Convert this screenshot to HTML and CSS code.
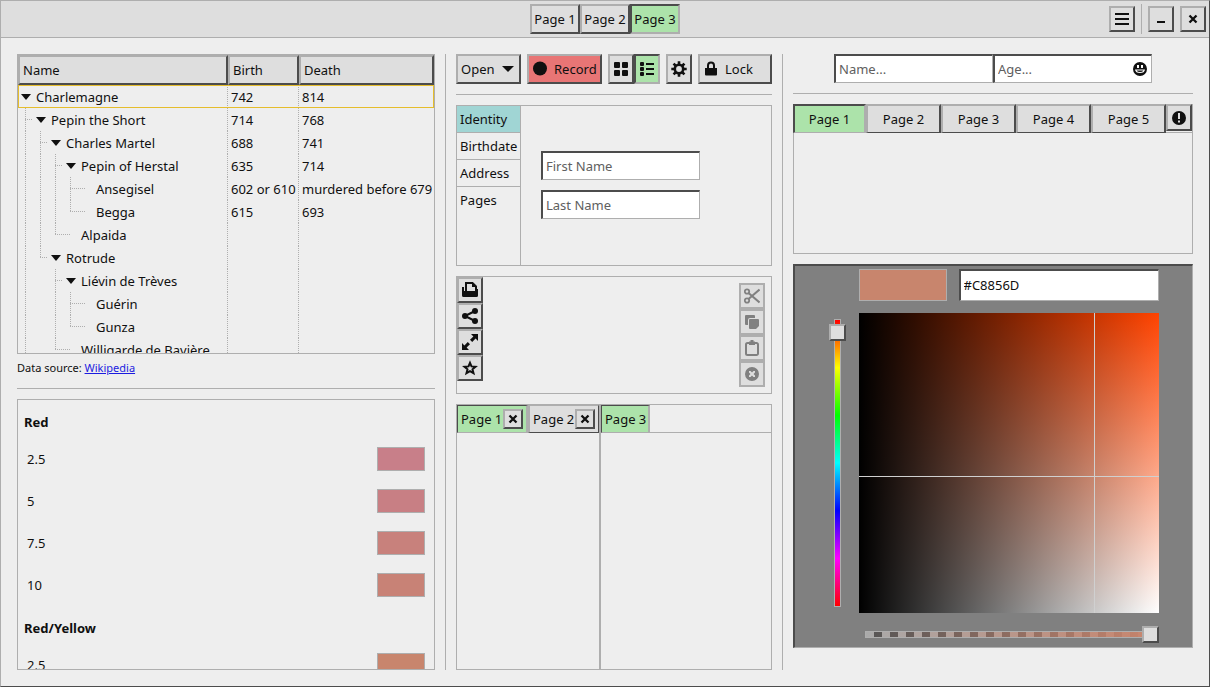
FILE: index.html
```html
<!DOCTYPE html>
<html lang="en">
<head>
<meta charset="utf-8">
<title>Widget Gallery</title>
<link rel="stylesheet" href="styles.css">
</head>
<body>
<div class="window">
  <header class="titlebar">
    <div class="linked title-tabs">
      <button class="btn text">Page 1</button><button class="btn text">Page 2</button><button class="btn text pressed" aria-pressed="true">Page 3</button>
    </div>
    <div class="window-controls">
      <button class="btn icon" aria-label="Menu"><svg viewBox="0 0 16 16"><path d="M1 2h14v2H1zM1 7h14v2H1zM1 12h14v2H1z"/></svg></button>
      <span class="vsep short"></span>
      <button class="btn icon" aria-label="Minimize"><svg viewBox="0 0 16 16"><path d="M4 10h8v2H4z"/></svg></button>
      <button class="btn icon" aria-label="Close"><svg viewBox="0 0 16 16"><path class="line" d="M4.500 4.500l7 7M11.500 4.500l-7 7" stroke-width="2.300"/></svg></button>
    </div>
  </header>

  <main class="columns">
    <section class="column">
      <div class="tree-block">
        <div class="panel tree-scroll">
          <table class="tree">
            <colgroup><col class="c-name"><col class="c-birth"><col></colgroup>
            <thead><tr><th>Name</th><th>Birth</th><th>Death</th></tr></thead>
            <tbody>
              <tr class="focused"><td><div class="node"><span class="exp open"></span>Charlemagne</div></td><td>742</td><td>814</td></tr>
              <tr><td><div class="node"><i class="g tee"></i><span class="exp open"></span>Pepin the Short</div></td><td>714</td><td>768</td></tr>
              <tr><td><div class="node"><i class="g bar"></i><i class="g tee"></i><span class="exp open"></span>Charles Martel</div></td><td>688</td><td>741</td></tr>
              <tr><td><div class="node"><i class="g bar"></i><i class="g bar"></i><i class="g tee"></i><span class="exp open"></span>Pepin of Herstal</div></td><td>635</td><td>714</td></tr>
              <tr><td><div class="node"><i class="g bar"></i><i class="g bar"></i><i class="g bar"></i><i class="g tee"></i><span class="exp leaf"></span>Ansegisel</div></td><td>602 or 610</td><td>murdered before 679</td></tr>
              <tr><td><div class="node"><i class="g bar"></i><i class="g bar"></i><i class="g bar"></i><i class="g end"></i><span class="exp leaf"></span>Begga</div></td><td>615</td><td>693</td></tr>
              <tr><td><div class="node"><i class="g bar"></i><i class="g bar"></i><i class="g end"></i><span class="exp leaf"></span>Alpaida</div></td><td></td><td></td></tr>
              <tr><td><div class="node"><i class="g bar"></i><i class="g end"></i><span class="exp open"></span>Rotrude</div></td><td></td><td></td></tr>
              <tr><td><div class="node"><i class="g bar"></i><i class="g"></i><i class="g tee"></i><span class="exp open"></span>Liévin de Trèves</div></td><td></td><td></td></tr>
              <tr><td><div class="node"><i class="g bar"></i><i class="g"></i><i class="g bar"></i><i class="g tee"></i><span class="exp leaf"></span>Guérin</div></td><td></td><td></td></tr>
              <tr><td><div class="node"><i class="g bar"></i><i class="g"></i><i class="g bar"></i><i class="g end"></i><span class="exp leaf"></span>Gunza</div></td><td></td><td></td></tr>
              <tr><td><div class="node"><i class="g bar"></i><i class="g"></i><i class="g end"></i><span class="exp leaf"></span>Willigarde de Bavière</div></td><td></td><td></td></tr>
            </tbody>
          </table>
        </div>
        <p class="source">Data source: <a href="#">Wikipedia</a></p>
      </div>
      <div class="hsep"></div>
      <div class="panel color-list">
        <h2>Red</h2>
        <ul>
          <li>2.5<span class="chip" style="background:#c87f89"></span></li>
          <li>5<span class="chip" style="background:#c87f84"></span></li>
          <li>7.5<span class="chip" style="background:#c8817c"></span></li>
          <li>10<span class="chip" style="background:#c88276"></span></li>
        </ul>
        <h2>Red/Yellow</h2>
        <ul>
          <li>2.5<span class="chip" style="background:#c8856d"></span></li>
        </ul>
      </div>
    </section>

    <div class="vsep"></div>

    <section class="column">
      <div class="toolbar">
        <button class="btn open-btn">Open<svg class="caret" viewBox="0 0 16 16"><path d="M2 5h12L8 11z"/></svg></button>
        <button class="btn labeled record"><svg viewBox="0 0 16 16"><circle cx="8" cy="7.500" r="7"/></svg>Record</button>
        <div class="linked">
          <button class="btn icon" aria-label="Grid view"><svg viewBox="0 0 16 16"><rect x="1" y="1" width="6" height="6" rx="1"/><rect x="9" y="1" width="6" height="6" rx="1"/><rect x="1" y="9" width="6" height="6" rx="1"/><rect x="9" y="9" width="6" height="6" rx="1"/></svg></button><button class="btn icon pressed" aria-label="List view" aria-pressed="true"><svg viewBox="0 0 16 16"><rect x="1" y="1" width="4" height="4" rx="1"/><rect x="1" y="6" width="4" height="4" rx="1"/><rect x="1" y="11" width="4" height="4" rx="1"/><path d="M7 2h8v2H7zM7 7h8v2H7zM7 12h8v2H7z"/></svg></button>
        </div>
        <button class="btn icon" aria-label="Settings"><svg viewBox="0 0 16 16"><circle class="line" cx="8" cy="8" r="4.200" stroke-width="2.600"/><path class="line" stroke-width="2.600" d="M8 .3v3M8 12.700v3M.3 8h3M12.700 8h3M2.550 2.550l2.200 2.200M11.250 11.250l2.200 2.200M2.550 13.450l2.200-2.200M11.250 4.750l2.200-2.200"/></svg></button>
        <button class="btn labeled lock"><svg viewBox="0 0 16 16"><path d="M2 7h12v6.500a1 1 0 0 1-1 1H3a1 1 0 0 1-1-1z"/><path class="line" d="M5 8V4.500a3 3 0 0 1 6 0V8" stroke-width="2"/></svg>Lock</button>
      </div>
      <div class="hsep"></div>
      <div class="panel stack">
        <nav class="sidebar">
          <button class="current">Identity</button>
          <button>Birthdate</button>
          <button>Address</button>
          <button>Pages</button>
        </nav>
        <div class="form">
          <input class="entry" type="text" placeholder="First Name" aria-label="First Name">
          <input class="entry" type="text" placeholder="Last Name" aria-label="Last Name">
        </div>
      </div>
      <div class="panel tools">
        <div class="tool-col">
          <button class="btn icon" aria-label="Print"><svg viewBox="0 0 16 16"><path class="line" d="M4 9V1h6.500L14 4.500V9" stroke-width="2"/><path d="M10 1v4h4zM0 5h2v6h12V7h2v6.500a1.500 1.500 0 0 1-1.500 1.500h-13A1.500 1.500 0 0 1 0 13.500zM2 9h12v4H2z"/></svg></button>
          <button class="btn icon" aria-label="Share"><svg viewBox="0 0 16 16"><circle cx="3" cy="8" r="3"/><circle cx="13" cy="3" r="3"/><circle cx="13" cy="13" r="3"/><path class="line" d="M13 3L3 8l10 5" stroke-width="2"/></svg></button>
          <button class="btn icon" aria-label="Fullscreen"><svg viewBox="0 0 16 16"><path d="M9 0h7v7l-2.400-2.400L10.200 8 8 5.800l3.400-3.400zM7 16H0V9l2.400 2.400L5.800 8 8 10.200l-3.400 3.400z"/></svg></button>
          <button class="btn icon" aria-label="Favorite"><svg viewBox="0 0 16 16"><path class="line" d="M8 2.800l1.500 3.600 4 .3-3 2.600 1 3.900L8 11.100l-3.500 2.100 1-3.900-3-2.600 4-.3z" stroke-width="2"/></svg></button>
        </div>
        <div class="tool-col inset">
          <button class="btn icon" disabled aria-label="Cut"><svg viewBox="0 0 16 16"><circle class="line" cx="3" cy="3.500" r="2.200" stroke-width="1.800"/><circle class="line" cx="3" cy="12.500" r="2.200" stroke-width="1.800"/><path class="line" d="M4.500 5L15.500 14.500M4.500 11L15.500 1.500" stroke-width="2"/></svg></button>
          <button class="btn icon" disabled aria-label="Copy"><svg viewBox="0 0 16 16"><path d="M2 1h8a1 1 0 0 1 1 1v2H6a2 2 0 0 0-2 2v5H2a1 1 0 0 1-1-1V2a1 1 0 0 1 1-1z"/><path d="M6 5h8a1 1 0 0 1 1 1v6l-3 3H6a1 1 0 0 1-1-1V6a1 1 0 0 1 1-1z"/></svg></button>
          <button class="btn icon" disabled aria-label="Paste"><svg viewBox="0 0 16 16"><path class="line" d="M5 3H3.500A1.500 1.500 0 0 0 2 4.500v9A1.500 1.500 0 0 0 3.500 15h9a1.500 1.500 0 0 0 1.500-1.500v-9A1.500 1.500 0 0 0 12.500 3H11" stroke-width="2"/><path d="M5 1.500h1.500V0h3v1.500H11V5H5z"/></svg></button>
          <button class="btn icon" disabled aria-label="Delete"><svg viewBox="0 0 16 16"><path fill-rule="evenodd" d="M8 1a7 7 0 1 0 0 14A7 7 0 0 0 8 1zM5 5h1.500L8 6.500 9.500 5H11v1.500L9.500 8 11 9.500V11H9.500L8 9.500 6.500 11H5V9.500L6.500 8 5 6.500z"/></svg></button>
        </div>
      </div>
      <div class="panel paned">
        <div class="notebook">
          <div class="tabs">
            <div class="tab active"><button class="tab-label">Page 1</button><button class="btn close" aria-label="Close Page 1"><svg viewBox="0 0 16 16"><path class="line" d="M4.500 4.500l7 7M11.500 4.500l-7 7" stroke-width="2.300"/></svg></button></div>
            <div class="tab"><button class="tab-label">Page 2</button><button class="btn close" aria-label="Close Page 2"><svg viewBox="0 0 16 16"><path class="line" d="M4.500 4.500l7 7M11.500 4.500l-7 7" stroke-width="2.300"/></svg></button></div>
          </div>
        </div>
        <div class="handle"></div>
        <div class="notebook grow">
          <div class="tabs"><div class="tab active"><button class="tab-label">Page 3</button></div></div>
        </div>
      </div>
    </section>

    <div class="vsep"></div>

    <section class="column">
      <div class="entries">
        <input class="entry" type="text" placeholder="Name..." aria-label="Name">
        <div class="entry with-icon">
          <input type="text" placeholder="Age..." aria-label="Age">
          <svg viewBox="0 0 16 16"><path fill-rule="evenodd" d="M8 1a7 7 0 1 0 0 14A7 7 0 0 0 8 1zM5 4h2v3H5zM9 4h2v3H9zM3 8.500h10Q12.500 12 8 12T3 8.500zM4.500 9.500Q5.500 11 8 11t3.500-1.500z"/></svg>
        </div>
      </div>
      <div class="hsep"></div>
      <div class="panel pages">
        <div class="wide-tabs">
          <button class="btn pressed">Page 1</button><button class="btn">Page 2</button><button class="btn">Page 3</button><button class="btn">Page 4</button><button class="btn">Page 5</button>
          <button class="btn icon alert" aria-label="Alert"><svg viewBox="0 0 16 16"><path fill-rule="evenodd" d="M8 1a7 7 0 1 0 0 14A7 7 0 0 0 8 1zM7 3h2v6H7zM7 10.500h2v2H7z"/></svg></button>
        </div>
      </div>
      <div class="picker">
        <div class="picker-top">
          <span class="sample"></span>
          <input class="entry" type="text" value="#C8856D" aria-label="Color value">
        </div>
        <input class="range hue" type="range" min="0" max="360" value="14" aria-label="Hue">
        <div class="plane"></div>
        <input class="range alpha" type="range" min="0" max="100" value="100" aria-label="Alpha">
      </div>
    </section>
  </main>
</div>
</body>
</html>
```
FILE: styles.css
```css
:root {
  --bg: #eeeeee;
  --face: #dedede;
  --light: #aeaeae;
  --dark: #4c4c4c;
  --ink: #101010;
  --green: #ace3aa;
}

* { box-sizing: border-box; }

body {
  margin: 0;
  font: 13px/18px "Noto Sans", sans-serif;
  color: var(--ink);
  background: var(--bg);
}

button, input { font: inherit; color: inherit; margin: 0; }
h2, p, ul { margin: 0; padding: 0; }
svg { width: 16px; height: 16px; flex: none; fill: currentColor; display: block; }
.line { fill: none; stroke: currentColor; }

.window {
  height: 100vh;
  display: flex;
  flex-direction: column;
  border: 1px solid;
  border-color: var(--light) var(--dark) var(--dark) var(--light);
}

/* Title bar */
.titlebar {
  display: grid;
  grid-template-columns: 1fr auto 1fr;
  align-items: center;
  padding: 3px;
  background: var(--face);
  border-bottom: 1px solid var(--light);
}
.title-tabs { grid-column: 2; }
.window-controls { display: flex; gap: 6px; justify-content: flex-end; align-items: center; }
.linked { display: flex; }

/* Buttons */
.btn {
  display: flex;
  align-items: center;
  height: 30px;
  padding: 0 3px;
  background: var(--face);
  border: 2px solid;
  border-color: var(--light) var(--dark) var(--dark) var(--light);
  border-radius: 0;
  white-space: nowrap;
}
.btn.pressed {
  background: var(--green);
  border-color: var(--dark) var(--light) var(--light) var(--dark);
}
.btn.icon { width: 26px; justify-content: center; }
.btn:disabled { color: #808080; border-color: var(--light); }
.title-tabs .btn { width: 50px; justify-content: center; padding: 0; }
.window-controls .btn, .tool-col .btn { height: 26px; }

/* Separators */
.vsep { background: var(--light); width: 1px; }
.vsep.short { height: 30px; }
.hsep { background: var(--light); height: 1px; flex: none; }

/* Columns */
.columns {
  flex: 1;
  min-height: 0;
  display: grid;
  grid-template-columns: minmax(0, 418fr) 1px minmax(0, 316fr) 1px minmax(0, 400fr);
  grid-template-rows: minmax(0, 1fr);
  gap: 10px;
  padding: 16px;
}
.column { display: flex; flex-direction: column; gap: 10px; min-height: 0; }
.panel { border: 1px solid var(--light); }

/* Tree */
.tree-scroll { height: 300px; overflow: hidden; }
.tree { width: 100%; table-layout: fixed; border-spacing: 0; }
.c-name { width: 210px; }
.c-birth { width: 71px; }
.tree th {
  height: 30px;
  padding: 0 3px;
  text-align: left;
  font-weight: 400;
  background: var(--face);
  border: 2px solid;
  border-color: var(--light) var(--dark) var(--dark) var(--light);
}
.tree td { height: 23px; padding: 0 3px; white-space: nowrap; border-right: 1px dotted var(--light); }
.tree td:first-child { padding: 0; }
.tree td:last-child { border-right: 0; }
.focused { outline: 1px solid #e5bd2c; outline-offset: -1px; }
.node { display: flex; align-items: center; height: 23px; }
.g, .exp {
  --v: repeating-linear-gradient(var(--light) 0 1px, transparent 1px 2px);
  --h: repeating-linear-gradient(to right, var(--light) 0 1px, transparent 1px 2px);
  align-self: stretch;
  flex: none;
  width: 15px;
}
.g.bar { background: var(--v) 7px 0 / 1px 100% no-repeat; }
.g.tee { background: var(--v) 7px 0 / 1px 100% no-repeat, var(--h) 7px 11px / 7px 1px no-repeat; }
.g.end { background: var(--v) 7px 0 / 1px 12px no-repeat, var(--h) 7px 11px / 7px 1px no-repeat; }
.exp { width: 18px; padding: 9px 0 0 3px; }
.exp.open::before {
  content: "";
  display: block;
  width: 10px;
  height: 6px;
  background: var(--ink);
  clip-path: polygon(0 0, 100% 0, 50% 100%);
}
.exp.leaf { background: var(--h) 0 11px / 7px 1px no-repeat; }
.source { height: 24px; padding-top: 5px; font-size: 11px; }
.source a { color: #1b1be0; }

/* Colour list */
.color-list { flex: 1; min-height: 0; overflow: hidden; }
.color-list h2 { height: 38px; padding: 13px 6px 0; font-size: 13px; line-height: 18px; }
.color-list li {
  display: flex;
  align-items: center;
  justify-content: space-between;
  height: 42px;
  padding: 0 9px;
}
.chip { width: 48px; height: 24px; border: 1px solid var(--light); }

/* Middle column */
.toolbar { display: flex; gap: 6px; }
.open-btn { width: 65px; justify-content: space-between; }
.labeled { gap: 6px; }
.record { width: 75px; background: #e87575; }
.lock { flex: 1; }

.stack { display: flex; height: 161px; }
.sidebar { display: flex; flex-direction: column; width: 64px; border-right: 1px solid var(--light); }
.sidebar button {
  height: 27px;
  padding: 0 3px;
  text-align: left;
  background: none;
  border: 0;
  border-bottom: 1px solid var(--light);
}
.sidebar button:last-child { border-bottom-color: transparent; }
.sidebar .current { background: #a0d5d4; }
.form { display: flex; flex-direction: column; justify-content: center; gap: 10px; padding: 0 20px 2px; }

.entry {
  width: 159px;
  height: 29px;
  padding: 0 3px;
  background: #fff;
  border: solid;
  border-width: 2px 1px 1px 2px;
  border-color: var(--dark) var(--light) var(--light) var(--dark);
  border-radius: 0;
}
::placeholder { color: #606060; opacity: 1; }

.tools { display: flex; justify-content: space-between; }
.tool-col.inset { padding: 6px; }

.paned { display: flex; flex: 1; min-height: 0; }
.handle { width: 2px; background: var(--light); }
.grow { flex: 1; }
.tabs { display: flex; height: 28px; border-bottom: 1px solid var(--light); }
.tab {
  display: flex;
  align-items: center;
  gap: 2px;
  height: 28px;
  padding: 0 3px;
  background: var(--face);
  border: solid;
  border-width: 1px 1px 1px 2px;
  border-color: var(--light) var(--dark) var(--dark) var(--light);
}
.tab.active {
  background: var(--green);
  border-width: 1px 2px 1px 1px;
  border-color: var(--dark) var(--light) var(--light) var(--dark);
}
.tab-label { padding: 0; width: 40px; border: 0; background: none; white-space: nowrap; }
.btn.close { width: 20px; height: 20px; padding: 0; justify-content: center; }

/* Right column */
.entries { display: flex; justify-content: center; }
.with-icon { display: flex; align-items: center; }
.with-icon input { flex: 1; min-width: 0; padding: 0; border: 0; background: none; }

.pages { height: 150px; border-top: 0; }
.wide-tabs { display: flex; margin-left: -1px; border-bottom: 1px solid var(--light); }
.wide-tabs .btn { flex: 1; height: 29px; justify-content: center; border-bottom-width: 1px; margin-bottom: -1px; }
.wide-tabs .pressed { flex: 0 1 73px; border-bottom-color: var(--light); }
.wide-tabs .alert { flex: none; height: 27px; border-bottom-width: 2px; }

.picker {
  display: grid;
  grid-template-columns: 17px 300px;
  grid-template-rows: 32px 300px 18px;
  gap: 12px 13px;
  justify-content: center;
  padding: 3px 0 4px;
  background: #808080;
  border: solid;
  border-width: 2px 1px 1px 2px;
  border-color: var(--dark) var(--light) var(--light) var(--dark);
}
.picker-top { grid-column: 2; display: flex; gap: 12px; }
.picker-top .entry { width: 200px; height: 32px; padding-bottom: 1px; }
.sample { flex: 1; background: #c8856d; border: 1px solid var(--light); }
.plane {
  background:
    linear-gradient(#d0d0d0, #d0d0d0) 235px 0 / 1px 100% no-repeat,
    linear-gradient(#d0d0d0, #d0d0d0) 0 163px / 100% 1px no-repeat,
    linear-gradient(to right, #000, transparent),
    linear-gradient(#ff4300, #fff);
}
.range { appearance: none; }
.range::-webkit-slider-runnable-track { background: none; }
.range::-webkit-slider-thumb {
  appearance: none;
  width: 17px;
  height: 17px;
  background: var(--face);
  border: 2px solid;
  border-color: var(--light) var(--dark) var(--dark) var(--light);
}
.hue {
  writing-mode: vertical-lr;
  width: 17px;
  height: 300px;
  background:
    linear-gradient(#f00, #ff0, #0f0, #0ff, #00f, #f0f, #f00) center / 5px calc(100% - 14px) no-repeat,
    linear-gradient(var(--light), var(--light)) center / 7px calc(100% - 12px) no-repeat;
}
.alpha {
  grid-column: 2;
  width: 100%;
  height: 17px;
  align-self: end;
  background:
    linear-gradient(to right, transparent, #c8856d) center / calc(100% - 14px) 5px no-repeat,
    repeating-linear-gradient(to right, #aaa 0 8px, #555 8px 16px) center / calc(100% - 14px) 5px no-repeat,
    linear-gradient(var(--light), var(--light)) center / calc(100% - 12px) 7px no-repeat;
}
```
